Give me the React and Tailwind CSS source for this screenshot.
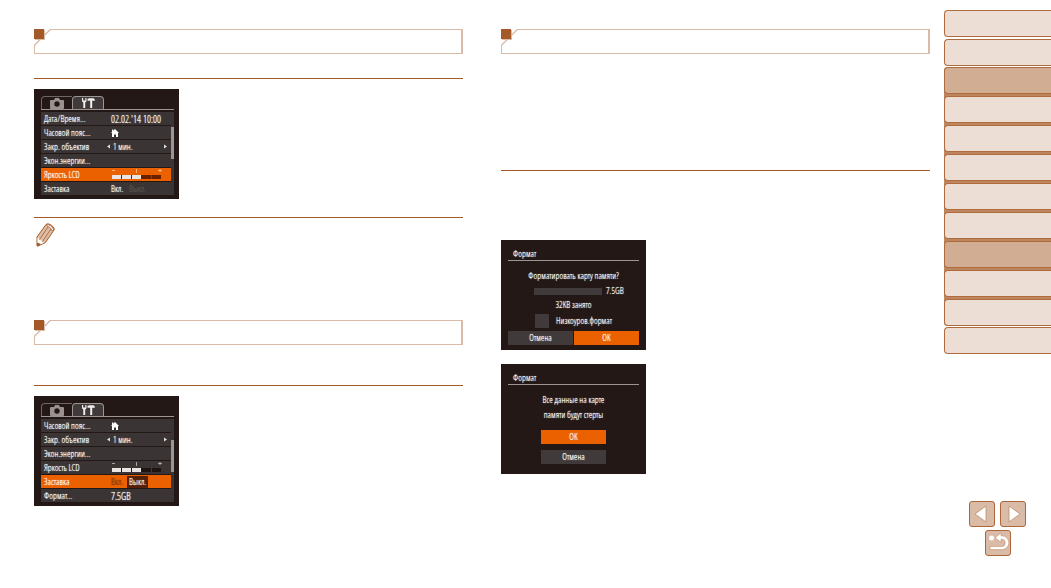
import React from "react";

function SectionHeader() {
  return (
    <header className="relative h-[25px] w-full border border-r-2 border-[#d9bba7]">
      <svg className="absolute -left-px -top-px h-[17px] w-[17px]" viewBox="0 0 17 17" aria-hidden="true">
        <path d="M0 0H17L0 17Z" fill="#fff" />
        <path d="M0.500 17V16.300L16.300 .5H17" fill="none" stroke="#d9bba7" strokeWidth="1.400" />
        <path d="M1 1h10v10H1z" fill="#d9bba7" />
        <path d="M0 0h10v10H0z" fill="#a35a28" />
      </svg>
    </header>
  );
}

function Rule() {
  return <hr className="h-px w-full border-0 bg-[#a35a28]" />;
}

function Camera() {
  return (
    <svg className="h-[11px] w-[14px]" viewBox="0 0 14 11" aria-hidden="true">
      <path d="M1 2h3l1-2h4l1 2h3q1 0 1 1v7q0 1-1 1H1q-1 0-1-1V3q0-1 1-1Z" fill="#99928e" />
      <circle cx="7" cy="6" r="2.700" fill="#231815" />
    </svg>
  );
}

function Tools() {
  return (
    <svg className="h-[11px] w-[14px]" viewBox="0 0 14 11" aria-hidden="true">
      <path d="M1 0v2.600q0 1.400 1.300 1.800V10h1.900V4.400Q5.500 4 5.500 2.600V0H4.300v2.400H2.200V0ZM6.500 1 8 .3h4.500L13.800 1.500v1.200h-2.600V10H9.200V2.700H6.500Z" fill="#f2f0ef" />
    </svg>
  );
}

function House() {
  return (
    <svg className="h-2 w-2" viewBox="0 0 8 8" aria-hidden="true">
      <path d="M4 0 8 4H7v4H5V5.500H3V8H1V4H0l1-1V.5h1.200v1.300Z" fill="#fff" />
    </svg>
  );
}

function Stepper({ children }) {
  return (
    <div className="flex w-full items-center justify-between pr-1">
      <div className="-ml-1 flex items-center gap-[3px]">
        <button aria-label="Назад">
          <svg className="h-[5px] w-[3px]" viewBox="0 0 3 5"><path d="M3 .5v4L0 2.500Z" fill="#ddd" /></svg>
        </button>
        <span>{children}</span>
      </div>
      <button aria-label="Вперёд">
        <svg className="h-[5px] w-[3px]" viewBox="0 0 3 5"><path d="M0 .5v4l3-2Z" fill="#ddd" /></svg>
      </button>
    </div>
  );
}

function Brightness({ active }) {
  return (
    <div className="relative h-[11px] w-[51px]">
      <svg className="h-full w-full" viewBox="0 0 51 11" aria-hidden="true">
        <path d="M1 1.500h3M25.500 0v4M47 1.500h4M49 0v3" stroke={active ? "#ffb47d" : "#aaa4a1"} />
        <path d="M1 6h49v4H1z" fill={active ? "#6b2100" : "#1e1412"} />
        <path d="M1 6h9v4H1zM11 6h9v4h-9zM21 6h9v4h-9z" fill="#e9e4e2" />
        <path d="M40.500 6v4" stroke={active ? "#a03900" : "#403938"} />
      </svg>
      <input type="range" min="0" max="5" defaultValue="3" aria-label="Яркость LCD" className="absolute inset-0 m-0 h-full w-full opacity-0" />
    </div>
  );
}

function Toggle({ name, on }) {
  return (
    <div className="flex items-center">
      <label className={on ? "w-4 text-white" : "w-4 text-[#843408]"}>
        <input className="sr-only" type="radio" name={name} defaultChecked={on} />Вкл.
      </label>
      <label className={on ? "px-0.5 text-[#5a5350]" : "bg-[#572008] px-0.5 text-white"}>
        <input className="sr-only" type="radio" name={name} defaultChecked={!on} />Выкл.
      </label>
    </div>
  );
}

const screenFont = "font-['Open_Sans_Condensed_Light','Open_Sans_Condensed',Roboto,sans-serif] font-light text-[9px] leading-[12px] text-white [text-shadow:0_0_1px_currentColor] [&_button]:[text-shadow:inherit]";

function MenuScreen({ rows, thumb }) {
  return (
    <section className={`h-[110px] w-[145px] bg-[#231815] pl-[7px] pr-[5px] pt-[7px] ${screenFont}`}>
      <nav className="flex h-[14px] w-full border-b border-[#9b9693]">
        <button aria-label="Съёмка" className="flex w-[31px] items-center justify-center rounded-tl-sm border-l border-t border-[#6d6662]"><Camera /></button>
        <button aria-label="Настройка" className="flex w-8 items-center justify-center rounded-t-sm border border-b-0 border-[#9b9693] bg-[#403b3a]"><Tools /></button>
      </nav>
      <div className="mt-[2px] flex">
        <div className="grid min-w-0 flex-1 auto-rows-[13px] grid-cols-1 gap-px">
          {rows.map(([label, value, active]) => (
            <div key={label} className={`flex min-w-0 items-center pl-[3px] ${active ? "bg-[#eb6100]" : "bg-[#3a3534]"}`}>
              <button className="w-[67px] shrink-0 whitespace-nowrap text-left">{label}</button>
              <div className="flex min-w-0 flex-1 items-center whitespace-nowrap">{value}</div>
            </div>
          ))}
        </div>
        <div className="w-[3px] shrink-0 bg-[#3a3534]"><div className={`h-8 w-full bg-[#9b9693] ${thumb}`} /></div>
      </div>
    </section>
  );
}

function DialogScreen({ children }) {
  return (
    <section className={`flex h-[110px] w-[145px] flex-col bg-[#231815] px-[7px] pt-2 ${screenFont}`}>
      <h2 className="border-b border-[#9b9693] pl-[5px]">Формат</h2>
      {children}
    </section>
  );
}

function Pencil() {
  return (
    <svg className="ml-[2px] mt-[5px] h-6 w-[19px]" viewBox="0 0 19 24" aria-hidden="true">
      <path d="M1 14 10 1.500Q11 .5 13 1q3 1 5 4 .5 1 0 2L9.500 19.500 2 23H1Z" fill="#ddbda6" stroke="#a35a28" strokeWidth="1" />
      <path d="m10.500 2.500 1.500-1q4 1 5.500 5l-1 1.500q-2-4-6-5.500Z" fill="#fff" stroke="#a35a28" strokeWidth=".7" />
      <path d="m1.500 14.500 1 .4 1.200 2 2 .6 1 2 2 .1L3 22H1.500Z" fill="#fff" />
      <path d="m12 4-8.500 12.500M15 6 6.500 18.500" stroke="#a35a28" strokeWidth=".8" />
      <path d="M1 19.500 5 21l-3 2H1Z" fill="#a35a28" />
    </svg>
  );
}

function SideTab({ dark }) {
  return (
    <a href="#" aria-label="Раздел" className={`block h-[27px] shrink-0 rounded-l-[4px] border border-r-0 border-[#b06b3d] ${dark ? "bg-[#d1ad93]" : "bg-[#ecded5]"}`} />
  );
}

function PageButton({ label, children }) {
  return (
    <button aria-label={label} className="h-[26px] w-[26px] rounded-[3px] border border-[#ab6639] bg-[#d9bba7]">
      <svg className="h-6 w-6" viewBox="0 0 24 24" aria-hidden="true">{children}</svg>
    </button>
  );
}

const powerRow = ["Экон.энергии...", null];
const zoneRow = ["Часовой пояс...", <House />];
const lensRow = ["Закр. объектив", <Stepper>1 мин.</Stepper>];

export default function App() {
  return (
    <div className="flex min-h-screen bg-white">
      <main className="grid flex-1 grid-cols-2 items-start gap-[38px] pl-[34px] pr-[14px] pt-[29px]">
        <div>
          <SectionHeader />
          <div className="pb-[10px] pt-6"><Rule /></div>
          <MenuScreen thumb="mt-[15px]" rows={[
            ["Дата/Время...", <span className="text-[10px]">02.02.'14 10:00</span>],
            zoneRow,
            lensRow,
            powerRow,
            ["Яркость LCD", <Brightness active />, true],
            ["Заставка", <Toggle name="first" on />],
          ]} />
          <div className="pt-[18px]"><Rule /></div>
          <Pencil />
          <div className="pt-[73px]"><SectionHeader /></div>
          <div className="pb-[10px] pt-10"><Rule /></div>
          <MenuScreen thumb="mt-[21px]" rows={[
            zoneRow,
            lensRow,
            powerRow,
            ["Яркость LCD", <Brightness />],
            ["Заставка", <Toggle name="second" />, true],
            ["Формат...", <span className="text-[10px]">7.5GB</span>],
          ]} />
        </div>
        <div>
          <SectionHeader />
          <div className="pb-[69px] pt-[116px]"><Rule /></div>
          <DialogScreen>
            <p className="mt-[9px] whitespace-nowrap text-center">Форматировать карту памяти?</p>
            <div className="mt-[3px] flex items-center gap-1 pl-[26px]">
              <div role="meter" aria-label="32KB занято" aria-valuenow="0" className="h-[7px] w-[68px] bg-[#403b3a]" />
              <span>7.5GB</span>
            </div>
            <p className="mt-[2px] text-center">32KB занято</p>
            <label className="mt-[3px] flex items-center gap-[7px] pl-[27px]">
              <input type="checkbox" className="h-[14px] w-[14px] appearance-none bg-[#403b3a]" />
              <span>Низкоуров.формат</span>
            </label>
            <div className="mt-[3px] grid h-[14px] grid-cols-2 gap-px">
              <button className="bg-[#403b3a]">Отмена</button>
              <button className="bg-[#eb6100]">OK</button>
            </div>
          </DialogScreen>
          <div className="pt-[14px]">
            <DialogScreen>
              <p className="mt-[7px] text-center leading-[15px]">Все данные на карте<br />памяти будут стерты</p>
              <div className="mx-auto mt-2 flex w-[65px] flex-col gap-[6px]">
                <button className="h-[14px] bg-[#eb6100]">OK</button>
                <button className="h-[14px] bg-[#403b3a]">Отмена</button>
              </div>
            </DialogScreen>
          </div>
        </div>
      </main>
      <aside className="flex w-[107px] flex-col pt-[10px]">
        <nav className="flex flex-col">
          <SideTab />
          <div className="pb-px pt-0.5"><SideTab /></div>
          <div className="flex flex-col gap-0.5 rounded-l-[4px] bg-[#bd865f]">
            {[0, 1, 2, 3, 4, 5, 6, 7, 8].map((i) => <SideTab key={i} dark={i === 0 || i === 6} />)}
          </div>
          <div className="pt-px"><SideTab /></div>
        </nav>
        <nav className="mb-[32px] mt-auto flex w-full flex-col items-center gap-[3px]">
          <div className="flex gap-[5px]">
            <PageButton label="Предыдущая страница"><path d="M16 4v16L5 12Z" fill="#fff" stroke="#bf8d6b" strokeWidth=".8" /></PageButton>
            <PageButton label="Следующая страница"><path d="M8 4v16l11-8Z" fill="#fff" stroke="#bf8d6b" strokeWidth=".8" /></PageButton>
          </div>
          <PageButton label="Вернуться">
            <circle cx="5.500" cy="7" r="2.500" fill="#fff" />
            <path d="M9 6.800 15 2v2.800h1a6.900 6.900 0 0 1 0 13.800H4v-3h11.500a3.700 3.700 0 0 0 0-7.400H15v3Z" fill="#fff" stroke="#bf8d6b" strokeWidth=".6" />
          </PageButton>
        </nav>
      </aside>
    </div>
  );
}
